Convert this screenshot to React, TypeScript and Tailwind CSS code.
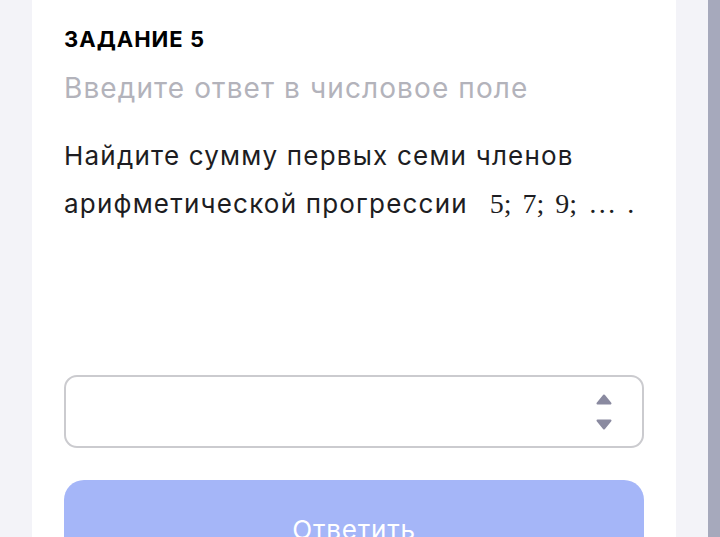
export default function App() {
  return (
    <div className="flex h-[537px] w-[720px] overflow-hidden bg-[#f3f3f8] font-['Inter',sans-serif]">
      <div className="w-[32px] shrink-0" />
      <div className="flex w-[644px] shrink-0 flex-col bg-white px-[32px] pt-[25px]">
        <h2 className="text-[22px] font-bold leading-[28px] tracking-[1px] text-black">ЗАДАНИЕ 5</h2>
        <p className="mt-[18px] text-[28px] leading-[34px] tracking-[1.1px] text-[#b3b3bb]">
          Введите ответ в числовое поле
        </p>
        <p className="mt-[27px] text-[26px] leading-[48px] tracking-[1.2px] text-[#1d1d22]">
          Найдите сумму первых семи членов
          <br />
          арифметической прогрессии
          <span className="ml-[22px] inline-flex gap-[11px] font-['Liberation_Serif',serif] text-[28px] tracking-normal">
            <span>5;</span>
            <span>7;</span>
            <span>9;</span>
            <span>…</span>
            <span>.</span>
          </span>
        </p>
        <div className="mt-[147px] flex h-[73px] shrink-0 items-center justify-end rounded-[13px] border-2 border-[#cbcbcf] pr-[30px]">
          <div className="flex flex-col items-center gap-[14px]">
            <svg width="16" height="11" viewBox="0 0 16 11">
              <path d="M8 1.5 L14.5 9.5 H1.5 Z" fill="#8a8aa0" stroke="#8a8aa0" strokeWidth="2" strokeLinejoin="round" />
            </svg>
            <svg width="16" height="11" viewBox="0 0 16 11">
              <path d="M8 9.5 L14.5 1.5 H1.5 Z" fill="#8a8aa0" stroke="#8a8aa0" strokeWidth="2" strokeLinejoin="round" />
            </svg>
          </div>
        </div>
        <button className="mt-[32px] flex h-[80px] shrink-0 justify-center rounded-[20px] bg-[#a5b6f8] pt-[30px] text-[26px] tracking-[0.8px] text-white">
          Ответить
        </button>
      </div>
      <div className="w-[32px] shrink-0" />
      <div className="w-[12px] shrink-0 bg-[#a6a9bc]" />
    </div>
  )
}
